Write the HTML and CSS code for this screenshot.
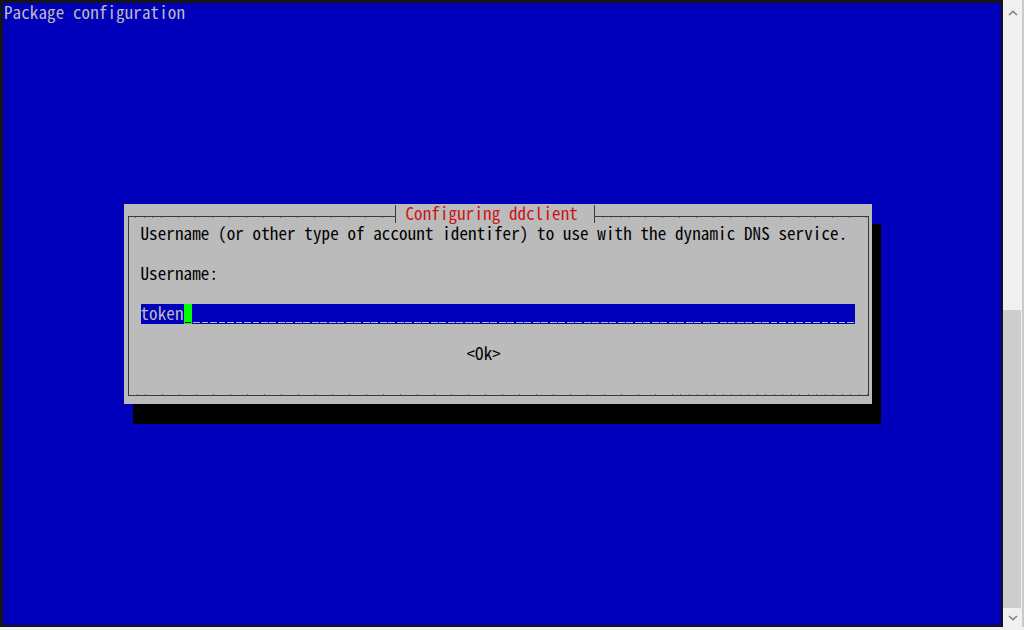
FILE: index.html
```html
<!DOCTYPE html>
<html>
<head>
<meta charset="utf-8">
<link rel="stylesheet" href="styles.css">
</head>
<body>
<div class="window">
  <div class="term">
    <div class="heading">Package configuration</div>
    <div class="dialog-wrap">
      <div class="dialog">
        <div class="titlebar">
          <span class="seg seg-left"></span>
          <span class="tee"></span>
          <span class="title">Configuring ddclient</span>
          <span class="tee"></span>
          <span class="seg seg-right"></span>
        </div>
        <div class="body">
          <p class="line">Username (or other type of account identifer) to use with the dynamic DNS service.</p>
          <p class="line">Username:</p>
          <div class="entry"><span class="entry-text">token</span><span class="cursor"></span><span class="fill"></span></div>
          <p class="line ok">&lt;Ok&gt;</p>
        </div>
      </div>
    </div>
  </div>
  <div class="scrollbar">
    <div class="arrow arrow-up"><svg width="10" height="6" viewBox="0 0 10 6"><path d="M1 5 L5 1.3 L9 5" fill="none" stroke="#858585" stroke-width="1.6"/></svg></div>
    <div class="track"><div class="thumb"></div></div>
    <div class="arrow arrow-down"><svg width="10" height="6" viewBox="0 0 10 6"><path d="M1 1 L5 4.7 L9 1" fill="none" stroke="#858585" stroke-width="1.6"/></svg></div>
  </div>
</div>
</body>
</html>
```
FILE: styles.css
```css
:root {
  --blue: #0000bb;
  --gray: #bbbbbb;
  --line: #3a3a3a;
}
html, body {
  margin: 0;
  padding: 0;
}
body {
  width: 1024px;
  height: 630px;
  overflow: hidden;
  background: #f0f0f0;
  font-family: "Noto Sans Mono CJK KR", "DejaVu Sans Mono", monospace;
  font-size: 17px;
  line-height: 18px;
  letter-spacing: 0.12px;
}
.window {
  display: flex;
  height: 627px;
}
.term {
  width: 1003px;
  box-sizing: border-box;
  border-style: solid;
  border-color: #141414;
  border-width: 3px 2px 2px 3px;
  background: var(--blue);
  display: grid;
  grid-template: 1fr / 1fr;
}
.heading {
  grid-area: 1 / 1;
  align-self: start;
  justify-self: start;
  height: 20px;
  padding: 0 0 0 1px;
  color: var(--gray);
  white-space: pre;
}
.dialog-wrap {
  grid-area: 1 / 1;
  place-self: center;
  padding: 0 9px 20px 0;
}
.dialog {
  width: 748px;
  height: 200px;
  box-sizing: border-box;
  background: var(--gray);
  box-shadow: 9px 20px 0 #000;
  padding: 0 3px 8px 4px;
  color: #000;
}
.titlebar {
  display: flex;
  height: 20px;
}
.seg-left {
  width: 267px;
  background:
    linear-gradient(var(--line), var(--line)) 0 12px / 100% 1px no-repeat,
    repeating-linear-gradient(to right, transparent 0 7.5px, #6a6a6a 7.5px 8.5px) 0 13px / 100% 1px no-repeat,
    linear-gradient(var(--line), var(--line)) 0 12px / 1px 8px no-repeat;
}
.seg-right {
  flex: 1;
  background:
    linear-gradient(var(--line), var(--line)) 0 12px / 100% 1px no-repeat,
    repeating-linear-gradient(to right, transparent 0 7.5px, #6a6a6a 7.5px 8.5px) 0 13px / 100% 1px no-repeat,
    linear-gradient(var(--line), var(--line)) right 12px / 1px 8px no-repeat;
}
.tee {
  width: 1px;
  background: linear-gradient(var(--line), var(--line)) 0 1px / 1px 18px no-repeat;
}
.title {
  height: 20px;
  color: #cc1414;
  margin: 0 16px 0 10px;
  white-space: pre;
}
.body {
  border: 1px solid var(--line);
  border-top: 0;
  padding: 0 13px 31px 12px;
  background: repeating-linear-gradient(to right, transparent 0 7.5px, #6a6a6a 7.5px 8.5px) 0 100% / 100% 1px no-repeat;
}
.line {
  margin: 0 0 20px;
  height: 20px;
  white-space: pre;
}
.entry {
  display: flex;
  height: 20px;
  margin-bottom: 20px;
  background: var(--blue);
  color: var(--gray);
}
.cursor {
  width: 8.5px;
  background:
    linear-gradient(#000, #000) 1px 18px / 6px 1px no-repeat,
    #00ff00;
}
.fill {
  flex: 1;
  background: repeating-linear-gradient(to right, var(--gray) 0 6.5px, transparent 6.5px 8.5px) 1px 18px / 100% 1px no-repeat;
}
.ok {
  margin-bottom: 0;
  padding-left: 326px;
}
.scrollbar {
  width: 19px;
  border-right: 2px solid #cacaca;
  display: flex;
  flex-direction: column;
  background: #f0f0f0;
}
.arrow {
  display: flex;
  align-items: center;
  justify-content: center;
}
.arrow-up {
  height: 25px;
}
.arrow-down {
  height: 19px;
}
.track {
  flex: 1;
  display: flex;
  flex-direction: column;
  justify-content: flex-end;
}
.thumb {
  width: 18px;
  height: 298px;
  background: #cdcdcd;
}
```
